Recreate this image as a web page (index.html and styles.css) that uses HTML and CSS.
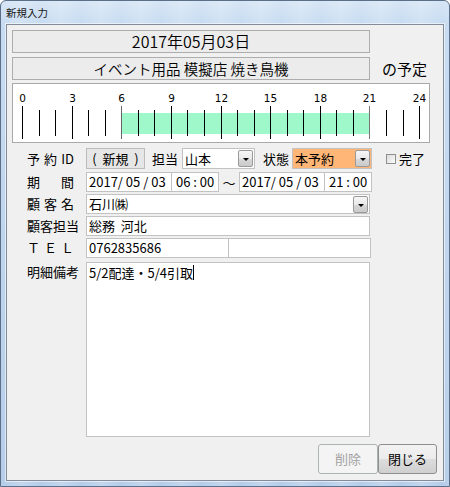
FILE: index.html
```html
<!DOCTYPE html>
<html lang="ja">
<head>
<meta charset="utf-8">
<title>新規入力</title>
<link rel="stylesheet" href="styles.css">
</head>
<body>
<div class="window">
  <div class="titlebar">新規入力</div>
  <div class="client">
    <div class="header">
      <div class="box date">2017年05月03日</div>
      <div></div>
      <div class="box event">イベント用品 模擬店 焼き鳥機</div>
      <div class="yotei">の予定</div>
    </div>
    <div class="timeline">
      <svg width="416" height="58" viewBox="0 0 416 58">
        <rect x="109" y="29" width="247" height="21" fill="#9ff8ca"/>
        <g font-family="DejaVu Sans, sans-serif" font-size="10.5" fill="#000" text-anchor="middle">
          <text x="9.5" y="18">0</text>
          <text x="59.5" y="18">3</text>
          <text x="108.5" y="18">6</text>
          <text x="158.5" y="18">9</text>
          <text x="208.5" y="18">12</text>
          <text x="257.5" y="18">15</text>
          <text x="307.5" y="18">18</text>
          <text x="356.5" y="18">21</text>
          <text x="406.5" y="18">24</text>
        </g>
        <g stroke="#000" stroke-width="1">
          <line x1="9.5" y1="22" x2="9.5" y2="55"/>
          <line x1="26.5" y1="26" x2="26.5" y2="52"/>
          <line x1="42.5" y1="26" x2="42.5" y2="52"/>
          <line x1="59.5" y1="22" x2="59.5" y2="55"/>
          <line x1="75.5" y1="26" x2="75.5" y2="52"/>
          <line x1="92.5" y1="26" x2="92.5" y2="52"/>
          <line x1="108.5" y1="22" x2="108.5" y2="55" stroke="#666"/>
          <line x1="125.5" y1="26" x2="125.5" y2="52"/>
          <line x1="141.5" y1="26" x2="141.5" y2="52"/>
          <line x1="158.5" y1="22" x2="158.5" y2="55"/>
          <line x1="174.5" y1="26" x2="174.5" y2="52"/>
          <line x1="191.5" y1="26" x2="191.5" y2="52"/>
          <line x1="208.5" y1="22" x2="208.5" y2="55"/>
          <line x1="224.5" y1="26" x2="224.5" y2="52"/>
          <line x1="241.5" y1="26" x2="241.5" y2="52"/>
          <line x1="257.5" y1="22" x2="257.5" y2="55"/>
          <line x1="274.5" y1="26" x2="274.5" y2="52"/>
          <line x1="290.5" y1="26" x2="290.5" y2="52"/>
          <line x1="307.5" y1="22" x2="307.5" y2="55"/>
          <line x1="323.5" y1="26" x2="323.5" y2="52"/>
          <line x1="340.5" y1="26" x2="340.5" y2="52"/>
          <line x1="356.5" y1="22" x2="356.5" y2="55" stroke="#777"/>
          <line x1="373.5" y1="26" x2="373.5" y2="52"/>
          <line x1="390.5" y1="26" x2="390.5" y2="52"/>
          <line x1="406.5" y1="22" x2="406.5" y2="55"/>
        </g>
      </svg>
    </div>
    <div class="form">
      <div class="row r1">
        <span class="label">予約ID</span>
        <span class="idbox">(&nbsp;&nbsp;新規&nbsp;&nbsp;)</span>
        <span class="sub tanto-l">担当</span>
        <span class="field select tanto"><span class="val">山本</span><span class="dd"></span></span>
        <span class="sub status-l">状態</span>
        <span class="field select status"><span class="val">本予約</span><span class="dd"></span></span>
        <span class="check"></span>
        <span class="sub done">完了</span>
      </div>
      <div class="row">
        <span class="label">期間</span>
        <span class="field d1">2017/ 05 / 03</span>
        <span class="field t1">06 : 00</span>
        <span class="tilde">〜</span>
        <span class="field d2">2017/ 05 / 03</span>
        <span class="field t2">21 : 00</span>
      </div>
      <div class="row">
        <span class="label">顧客名</span>
        <span class="field select wide"><span class="val">石川㈱</span><span class="dd"></span></span>
      </div>
      <div class="row">
        <span class="label">顧客担当</span>
        <span class="field wide">総務&nbsp;&nbsp;河北</span>
      </div>
      <div class="row">
        <span class="label">ＴＥＬ</span>
        <span class="field half">0762835686</span>
        <span class="field half second"></span>
      </div>
      <div class="row memo-row">
        <span class="label">明細備考</span>
        <div class="field memo">5/2配達・5/4引取<span class="caret"></span></div>
      </div>
    </div>
    <div class="buttons">
      <span class="btn disabled">削除</span>
      <span class="btn">閉じる</span>
    </div>
  </div>
</div>
</body>
</html>
```
FILE: styles.css
```css
html, body {
  margin: 0;
  padding: 0;
  background: #fff;
}
body {
  font-family: "Noto Sans CJK JP", "Noto Sans", sans-serif;
  color: #000;
}
.window {
  width: 450px;
  height: 487px;
  box-sizing: border-box;
  border: 1px solid #5b6f88;
  border-radius: 6px 6px 0 0;
  background:
    repeating-linear-gradient(90deg, rgba(255,255,255,0) 0, rgba(255,255,255,0.18) 20px, rgba(255,255,255,0) 40px),
    linear-gradient(180deg, #d6e5f5 0, #c6dbf1 24px, #b5cde9 100%);
  display: flex;
  flex-direction: column;
}
.titlebar {
  height: 23px;
  line-height: 23px;
  padding-left: 5px;
  font-size: 10.5px;
  color: #1a1a1a;
}
.client {
  flex: 1;
  margin: 0 5px 5px 5px;
  border: 1px solid #838d99;
  box-shadow: 0 0 0 1px rgba(255,255,255,0.55);
  background: #f0f0f0;
  padding: 5px 6px 5px 5px;
  display: flex;
  flex-direction: column;
}
.header {
  display: grid;
  grid-template-columns: 358px 1fr;
  grid-template-rows: 23px 23px;
  row-gap: 4px;
}
.box {
  box-sizing: border-box;
  border: 1px solid #adadad;
  background: #ececec;
  display: flex;
  align-items: center;
  justify-content: center;
  color: #000;
}
.date {
  font-size: 16px;
  font-weight: 350;
  line-height: 21px;
}
.event {
  font-size: 14.5px;
  font-weight: 350;
  line-height: 21px;
}
.yotei {
  font-size: 15px;
  line-height: 23px;
  padding-left: 12px;
}
.timeline {
  margin-top: 3px;
  width: 418px;
  height: 60px;
  box-sizing: border-box;
  border: 1px solid #a9a9a9;
  background: #fff;
}
.timeline svg {
  display: block;
}
.form {
  margin-top: 5px;
  display: flex;
  flex-direction: column;
  gap: 2px;
}
.row {
  display: flex;
  align-items: center;
  height: 20px;
  padding-left: 15px;
  font-size: 13px;
}
.row.r1 {
  height: 21px;
  margin-bottom: 1px;
}
.label {
  width: 47px;
  margin-right: 12px;
  text-align: justify;
  text-align-last: justify;
  font-size: 13px;
  line-height: 20px;
  white-space: nowrap;
}
.field {
  box-sizing: border-box;
  height: 20px;
  border: 1px solid #c2c2c2;
  background: #fff;
  padding: 0 2px;
  display: flex;
  align-items: center;
  font-size: 13px;
  line-height: 18px;
  white-space: nowrap;
}
.idbox {
  box-sizing: border-box;
  width: 59px;
  height: 21px;
  border: 1px solid #bcbcbc;
  background: #e6e6e6;
  display: flex;
  align-items: center;
  justify-content: center;
  font-size: 13px;
  line-height: 19px;
  white-space: nowrap;
}
.sub {
  font-size: 13px;
  line-height: 20px;
  white-space: nowrap;
}
.tanto-l { margin-left: 7px; }
.status-l { margin-left: 8px; }
.select {
  padding-right: 1px;
  justify-content: space-between;
}
.select .val {
  flex: 1;
}
.tanto {
  width: 73px;
  height: 21px;
  margin-left: 4px;
}
.status {
  width: 80px;
  height: 21px;
  margin-left: 3px;
  background: #ffb676;
}
.dd {
  box-sizing: border-box;
  width: 15px;
  height: 17px;
  border: 1px solid #9a9a9a;
  border-radius: 2px;
  background: linear-gradient(180deg, #f6f6f6 0%, #e9e9e9 50%, #d8d8d8 51%, #cacaca 100%);
  position: relative;
}
.dd::after {
  content: "";
  position: absolute;
  left: 4px;
  top: 7px;
  border-left: 3px solid transparent;
  border-right: 3px solid transparent;
  border-top: 3px solid #000;
}
.check {
  box-sizing: border-box;
  width: 10px;
  height: 10px;
  margin-left: 14px;
  border: 1px solid #8e8f8f;
  background: linear-gradient(135deg, #dcdcdc, #fbfbfb);
}
.done { margin-left: 3px; }
.d1 { width: 86px; }
.t1 { width: 48px; margin-left: -1px; padding-left: 4px; }
.tilde {
  width: 20px;
  text-align: center;
  font-size: 13px;
}
.d2 { width: 86px; }
.t2 { width: 48px; margin-left: -1px; padding-left: 4px; }
.wide { width: 284px; }
.half { width: 143px; }
.half.second { margin-left: -1px; }
.memo-row {
  height: 175px;
  align-items: flex-start;
  margin-top: 2px;
}
.memo {
  width: 284px;
  height: 175px;
  align-items: flex-start;
  padding-top: 1px;
}
.caret {
  display: inline-block;
  width: 0;
  height: 15px;
  border-left: 1px solid #000;
  margin-top: 1px;
}
.buttons {
  margin-top: 7px;
  display: flex;
  justify-content: flex-end;
}
.btn {
  box-sizing: border-box;
  width: 60px;
  height: 30px;
  border: 1px solid #8e8f8f;
  border-radius: 3px;
  background: linear-gradient(180deg, #f2f2f2 0%, #ebebeb 50%, #dddddd 51%, #cfcfcf 100%);
  display: flex;
  align-items: center;
  justify-content: center;
  font-size: 13px;
  line-height: 18px;
}
.btn.disabled {
  border-color: #adb2b5;
  background: #f4f4f4;
  color: #a3a3a3;
}
.btn + .btn {
  width: 59px;
}
```
